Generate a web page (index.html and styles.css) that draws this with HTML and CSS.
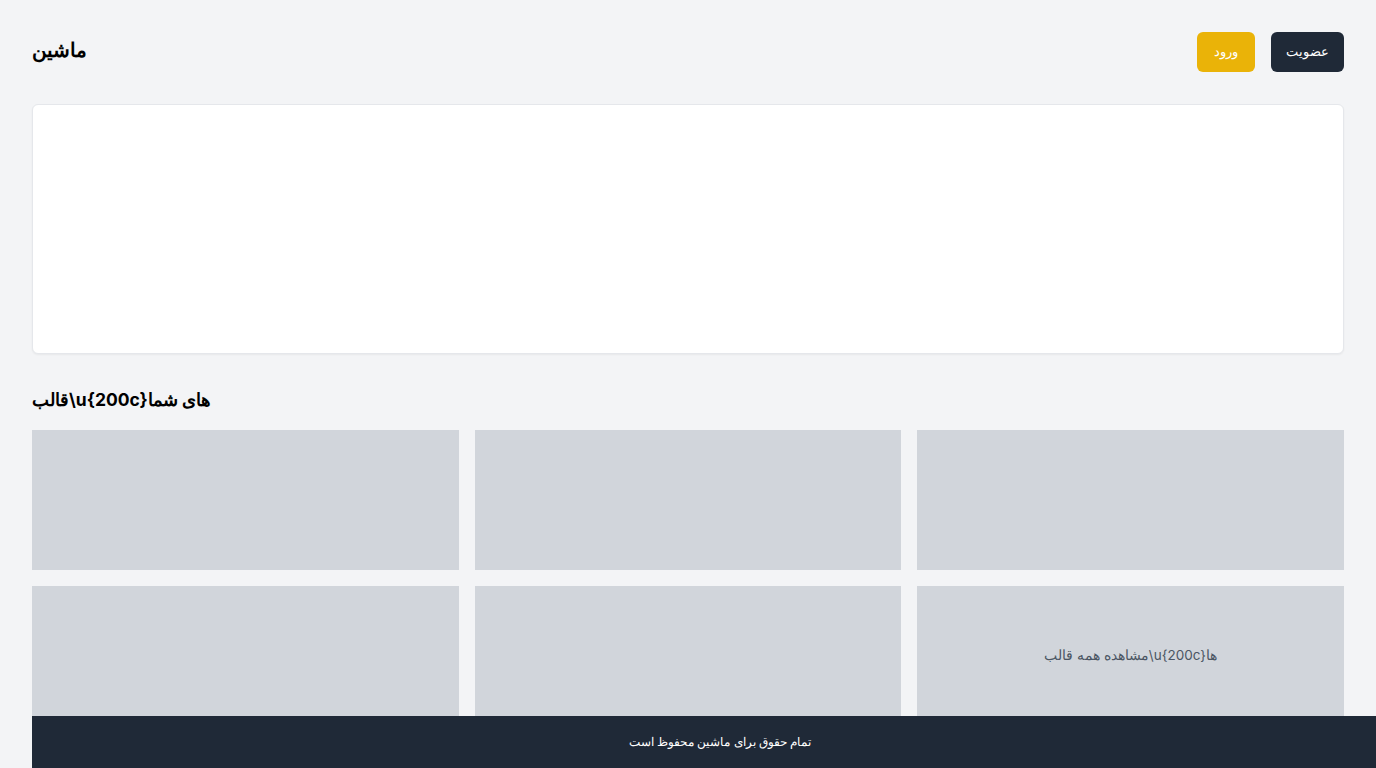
FILE: index.html
```html
<!DOCTYPE html>
<html lang="fa">
<head>
<meta charset="utf-8">
<title>ماشین</title>
<link rel="stylesheet" href="styles.css">
</head>
<body>
<div class="page">
  <header class="header">
    <div class="logo">ماشین</div>
    <nav class="actions">
      <a class="btn btn-login">ورود</a>
      <a class="btn btn-signup">عضویت</a>
    </nav>
  </header>
  <section class="hero-card"></section>
  <h2 class="section-title">قالب\u{200c}های شما</h2>
  <div class="grid">
    <div class="tile"></div>
    <div class="tile"></div>
    <div class="tile"></div>
    <div class="tile"></div>
    <div class="tile"></div>
    <a class="tile tile-link"><span>مشاهده همه قالب\u{200c}ها</span></a>
  </div>
</div>
<footer class="footer">تمام حقوق برای ماشین محفوظ است</footer>
</body>
</html>
```

FILE: styles.css
```css
* { box-sizing: border-box; }
html, body { margin: 0; padding: 0; }
body {
  background: #f3f4f6;
  font-family: Inter, sans-serif;
  color: #111827;
}
.page {
  padding: 32px 32px 60px;
}
.header {
  display: flex;
  align-items: center;
  justify-content: space-between;
  height: 40px;
}
.logo {
  font-size: 19.5px;
  font-weight: 700;
  color: #000;
  margin-top: -4px;
}
.actions {
  display: flex;
  gap: 16px;
}
.btn {
  display: flex;
  align-items: center;
  justify-content: center;
  height: 40px;
  padding: 0 16px;
  border-radius: 6px;
  font-size: 13px;
  color: #fff;
  text-decoration: none;
  padding-bottom: 2px;
}
.btn-login { background: #eab308; width: 58px; }
.btn-signup { background: #1f2937; width: 73px; }
.hero-card {
  margin-top: 32px;
  height: 250px;
  background: #fff;
  border: 1px solid #e5e7eb;
  border-radius: 6px;
  box-shadow: 0 1px 2px rgba(0,0,0,0.05);
}
.section-title {
  margin: 32px 0 16px;
  font-size: 17.5px;
  line-height: 28px;
  font-weight: 700;
  color: #000;
}
.grid {
  display: grid;
  grid-template-columns: repeat(3, 1fr);
  gap: 16px;
}
.tile {
  height: 140px;
  background: #d1d5db;
}
.tile-link {
  display: flex;
  align-items: center;
  justify-content: center;
  color: #4b5563;
  font-size: 13.5px;
  text-decoration: none;
  padding-bottom: 2px;
}
.footer {
  position: fixed;
  bottom: 0;
  left: 32px;
  width: 100%;
  height: 52px;
  background: #1f2937;
  color: #fff;
  font-size: 11.5px;
  display: flex;
  align-items: center;
  justify-content: center;
}
```
